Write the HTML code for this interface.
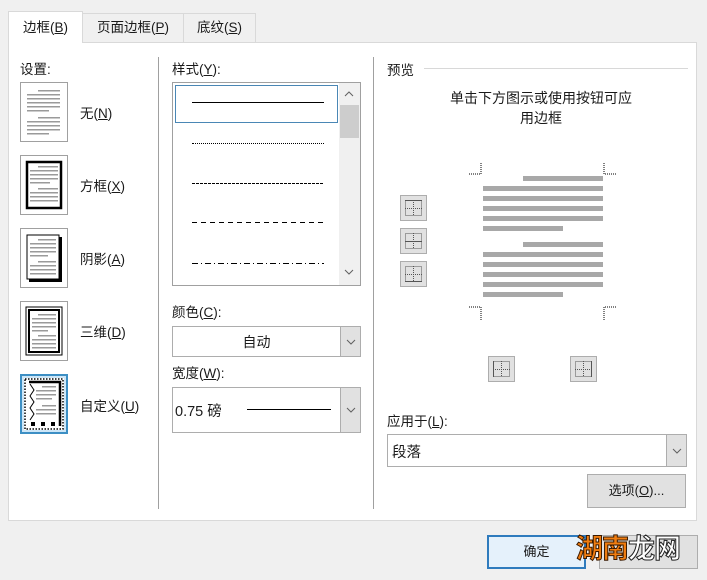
<!DOCTYPE html>
<html><head><meta charset="utf-8"><style>
*{box-sizing:border-box;margin:0;padding:0}
body{width:707px;height:580px;background:#f0f0f0;position:relative;overflow:hidden;font-family:"Liberation Sans","Noto Sans CJK SC",sans-serif;font-size:13px;color:#1a1a1a}
.a{position:absolute}
.tab{position:absolute;border:1px solid #d9d9d9;border-bottom:none;background:#f0f0f0;text-align:center;line-height:28px;font-size:13.5px}
u{text-decoration:underline}
.panel{left:8px;top:42px;width:689px;height:479px;background:#fff;border:1px solid #d9d9d9}
.icon{position:absolute;left:20px;width:48px;height:60px;border:1px solid #a0a0a0;background:#fff}
.lbl{position:absolute;left:80px;font-size:13.5px}
.combo{position:absolute;border:1px solid #adadad;background:#fff}
.dd{position:absolute;right:0;top:0;bottom:0;width:20px;background:#e1e1e1;border-left:1px solid #adadad;display:flex;align-items:center;justify-content:center}
.btn{position:absolute;border:1px solid #adadad;background:#e1e1e1;text-align:center}
.sq{position:absolute;width:27px;height:26px;border:1px solid #adadad;background:#e1e1e1}
.gb{position:absolute;height:5px;background:#a8a8a8}
</style></head><body>
<div class="tab" style="left:8px;top:11px;width:75px;height:32px;background:#fff;z-index:2;line-height:32px">边框(<u>B</u>)</div>
<div class="tab" style="left:82px;top:13px;width:102px;height:29px">页面边框(<u>P</u>)</div>
<div class="tab" style="left:183px;top:13px;width:73px;height:29px">底纹(<u>S</u>)</div>
<div class="a panel"></div>

<div class="a" style="left:20px;top:58px;font-size:13.5px">设置:</div>
<div class="a" style="left:158px;top:57px;width:1px;height:452px;background:#a0a0a0"></div>
<div class="a" style="left:373px;top:57px;width:1px;height:452px;background:#a0a0a0"></div>

<div class="icon" style="top:82px"><svg width="46" height="58"><g fill="#9a9a9a">
<rect x="17" y="7" width="22" height="1.5"/><rect x="6" y="11" width="33" height="1.5"/><rect x="6" y="15" width="33" height="1.5"/><rect x="6" y="19" width="33" height="1.5"/><rect x="6" y="23" width="33" height="1.5"/><rect x="6" y="27" width="22" height="1.5"/>
<rect x="17" y="34" width="22" height="1.5"/><rect x="6" y="38" width="33" height="1.5"/><rect x="6" y="42" width="33" height="1.5"/><rect x="6" y="46" width="33" height="1.5"/><rect x="6" y="50" width="22" height="1.5"/></g></svg></div>
<div class="lbl" style="top:102px">无(<u>N</u>)</div>

<div class="icon" style="top:155px"><svg width="46" height="58"><rect x="6" y="6" width="34" height="46" fill="none" stroke="#000" stroke-width="2.5"/><g fill="#9a9a9a">
<rect x="17" y="10" width="20" height="1.5"/><rect x="9" y="14" width="28" height="1.5"/><rect x="9" y="18" width="28" height="1.5"/><rect x="9" y="22" width="28" height="1.5"/><rect x="9" y="26" width="20" height="1.5"/>
<rect x="17" y="32" width="20" height="1.5"/><rect x="9" y="36" width="28" height="1.5"/><rect x="9" y="40" width="28" height="1.5"/><rect x="9" y="44" width="28" height="1.5"/></g></svg></div>
<div class="lbl" style="top:175px">方框(<u>X</u>)</div>

<div class="icon" style="top:228px"><svg width="46" height="58"><rect x="6" y="6" width="32" height="44" fill="none" stroke="#000" stroke-width="1"/><rect x="38" y="8" width="3" height="45" fill="#000"/><rect x="8" y="50" width="33" height="3" fill="#000"/><g fill="#9a9a9a">
<rect x="17" y="10" width="18" height="1.5"/><rect x="9" y="14" width="26" height="1.5"/><rect x="9" y="18" width="26" height="1.5"/><rect x="9" y="22" width="26" height="1.5"/><rect x="9" y="26" width="18" height="1.5"/>
<rect x="17" y="32" width="18" height="1.5"/><rect x="9" y="36" width="26" height="1.5"/><rect x="9" y="40" width="26" height="1.5"/><rect x="9" y="44" width="26" height="1.5"/></g></svg></div>
<div class="lbl" style="top:248px">阴影(<u>A</u>)</div>

<div class="icon" style="top:301px"><svg width="46" height="58"><rect x="5" y="5" width="36" height="48" fill="none" stroke="#000" stroke-width="1"/><rect x="8" y="8" width="30" height="42" fill="none" stroke="#000" stroke-width="2"/><g fill="#9a9a9a">
<rect x="17" y="12" width="18" height="1.5"/><rect x="11" y="16" width="24" height="1.5"/><rect x="11" y="20" width="24" height="1.5"/><rect x="11" y="24" width="24" height="1.5"/><rect x="11" y="28" width="16" height="1.5"/>
<rect x="17" y="33" width="18" height="1.5"/><rect x="11" y="37" width="24" height="1.5"/><rect x="11" y="41" width="24" height="1.5"/><rect x="11" y="45" width="24" height="1.5"/></g></svg></div>
<div class="lbl" style="top:321px">三维(<u>D</u>)</div>

<div class="icon" style="top:374px;border:2px solid #3d8fc4;background:#cde6f7;padding:2px"><svg width="40" height="52" style="background:#fff;display:block"><rect x="1" y="1" width="38" height="50" fill="none" stroke="#000" stroke-width="1.5" stroke-dasharray="1.5 1.5"/><path d="M5 4H36V48" fill="none" stroke="#000" stroke-width="2.5"/><path d="M6 6L10 12L6 18L10 24L6 30L10 36L6 42" fill="none" stroke="#000" stroke-width="1"/><rect x="7" y="44" width="4" height="4"/><rect x="17" y="44" width="4" height="4"/><rect x="27" y="44" width="4" height="4"/><g fill="#9a9a9a">
<rect x="18" y="8" width="14" height="1.5"/><rect x="12" y="12" width="20" height="1.5"/><rect x="12" y="16" width="20" height="1.5"/><rect x="12" y="20" width="16" height="1.5"/>
<rect x="18" y="27" width="14" height="1.5"/><rect x="12" y="31" width="20" height="1.5"/><rect x="12" y="35" width="20" height="1.5"/></g></svg></div>
<div class="lbl" style="top:395px">自定义(<u>U</u>)</div>

<div class="a" style="left:172px;top:58px;font-size:13.5px">样式(<u>Y</u>):</div>
<div class="a" style="left:172px;top:82px;width:189px;height:204px;border:1px solid #a0a0a0;background:#fff">
 <div class="a" style="left:2px;top:2px;width:163px;height:38px;border:1px solid #4a87b5"></div>
 <div class="a" style="left:19px;top:19px;width:132px;height:1px;background:#000"></div>
 <div class="a" style="left:19px;top:60px;width:132px;border-top:1px dotted #000"></div>
 <div class="a" style="left:19px;top:100px;width:132px;height:1px;background:repeating-linear-gradient(90deg,#000 0 3px,transparent 3px 4px)"></div>
 <div class="a" style="left:19px;top:139px;width:132px;height:1px;background:repeating-linear-gradient(90deg,#000 0 5px,transparent 5px 9px)"></div>
 <div class="a" style="left:19px;top:180px;width:132px;height:1px;background:repeating-linear-gradient(90deg,#000 0 6px,transparent 6px 9px,#000 9px 10px,transparent 10px 13px)"></div>
 <div class="a" style="left:166px;top:0;width:21px;height:202px;background:#f0f0f0"></div>
 <div class="a" style="left:167px;top:22px;width:19px;height:33px;background:#cdcdcd"></div>
 <svg class="a" style="left:171px;top:8px" width="10" height="6"><path d="M1 5L5 1L9 5" fill="none" stroke="#606060"/></svg>
 <svg class="a" style="left:171px;top:186px" width="10" height="6"><path d="M1 1L5 5L9 1" fill="none" stroke="#606060"/></svg>
</div>

<div class="a" style="left:172px;top:301px;font-size:13.5px">颜色(<u>C</u>):</div>
<div class="combo" style="left:172px;top:326px;width:189px;height:31px"><div class="a" style="left:0;width:167px;top:5px;text-align:center;font-size:14px">自动</div><div class="dd"><svg width="10" height="6"><path d="M1 1L5 5L9 1" fill="none" stroke="#606060"/></svg></div></div>
<div class="a" style="left:172px;top:362px;font-size:13.5px">宽度(<u>W</u>):</div>
<div class="combo" style="left:172px;top:387px;width:189px;height:46px"><div class="a" style="left:2px;top:12px;font-size:14.5px">0.75 磅</div><div class="a" style="left:74px;top:21px;width:84px;height:1px;background:#000"></div><div class="dd"><svg width="10" height="6"><path d="M1 1L5 5L9 1" fill="none" stroke="#606060"/></svg></div></div>

<div class="a" style="left:387px;top:59px;font-size:13.5px">预览</div>
<div class="a" style="left:424px;top:68px;width:264px;height:1px;background:#d8d8d8"></div>
<div class="a" style="left:387px;top:88px;width:308px;text-align:center;font-size:14px;line-height:20px">单击下方图示或使用按钮可应<br>用边框</div>

<svg class="a" style="left:466px;top:160px" width="150" height="162"><g fill="none" stroke="#000" stroke-dasharray="1 1"><path d="M3 14H15V3"/><path d="M138 3V14H150"/><path d="M3 147H15V160"/><path d="M150 147H138V160"/></g></svg>
<div class="gb" style="left:523px;top:176px;width:80px"></div>
<div class="gb" style="left:483px;top:186px;width:120px"></div>
<div class="gb" style="left:483px;top:196px;width:120px"></div>
<div class="gb" style="left:483px;top:206px;width:120px"></div>
<div class="gb" style="left:483px;top:216px;width:120px"></div>
<div class="gb" style="left:483px;top:226px;width:80px"></div>
<div class="gb" style="left:523px;top:242px;width:80px"></div>
<div class="gb" style="left:483px;top:252px;width:120px"></div>
<div class="gb" style="left:483px;top:262px;width:120px"></div>
<div class="gb" style="left:483px;top:272px;width:120px"></div>
<div class="gb" style="left:483px;top:282px;width:120px"></div>
<div class="gb" style="left:483px;top:292px;width:80px"></div>

<div class="sq" style="left:400px;top:195px"><svg width="25" height="24"><g fill="none" stroke="#555" stroke-dasharray="1 1"><rect x="4.5" y="4.5" width="16" height="15"/><path d="M12.5 4V20M4 12.5H21"/></g><path d="M4 4.5H21" stroke="#555"/></svg></div>
<div class="sq" style="left:400px;top:228px"><svg width="25" height="24"><g fill="none" stroke="#555" stroke-dasharray="1 1"><rect x="4.5" y="4.5" width="16" height="15"/><path d="M12.5 4V20"/></g><path d="M4 12.5H21" stroke="#555"/></svg></div>
<div class="sq" style="left:400px;top:261px"><svg width="25" height="24"><g fill="none" stroke="#555" stroke-dasharray="1 1"><rect x="4.5" y="4.5" width="16" height="15"/><path d="M12.5 4V20M4 12.5H21"/></g><path d="M4 19.5H21" stroke="#555"/></svg></div>
<div class="sq" style="left:488px;top:356px"><svg width="25" height="24"><g fill="none" stroke="#555" stroke-dasharray="1 1"><rect x="4.5" y="4.5" width="16" height="15"/><path d="M12.5 4V20M4 12.5H21"/></g><path d="M4.5 4V20" stroke="#555"/></svg></div>
<div class="sq" style="left:570px;top:356px"><svg width="25" height="24"><g fill="none" stroke="#555" stroke-dasharray="1 1"><rect x="4.5" y="4.5" width="16" height="15"/><path d="M12.5 4V20M4 12.5H21"/></g><path d="M20.5 4V20" stroke="#555"/></svg></div>

<div class="a" style="left:387px;top:410px;font-size:13.5px">应用于(<u>L</u>):</div>
<div class="combo" style="left:387px;top:434px;width:300px;height:33px"><div class="a" style="left:4px;top:6px;font-size:14.5px">段落</div><div class="dd"><svg width="10" height="6"><path d="M1 1L5 5L9 1" fill="none" stroke="#606060"/></svg></div></div>
<div class="btn" style="left:587px;top:474px;width:99px;height:34px;line-height:32px">选项(<u>O</u>)...</div>

<div class="btn" style="left:487px;top:535px;width:99px;height:34px;line-height:30px;border:2px solid #2f7bbd;background:#e5f1fb">确定</div>
<div class="btn" style="left:599px;top:535px;width:99px;height:34px"></div>
<div class="a" style="left:576px;top:532px;font-size:27px;font-weight:bold;letter-spacing:-1px;line-height:34px"><span style="color:#f07d10;-webkit-text-stroke:1px #3a1a00">湖南</span><span style="color:#fff;-webkit-text-stroke:1px #222">龙网</span></div>
</body></html>
